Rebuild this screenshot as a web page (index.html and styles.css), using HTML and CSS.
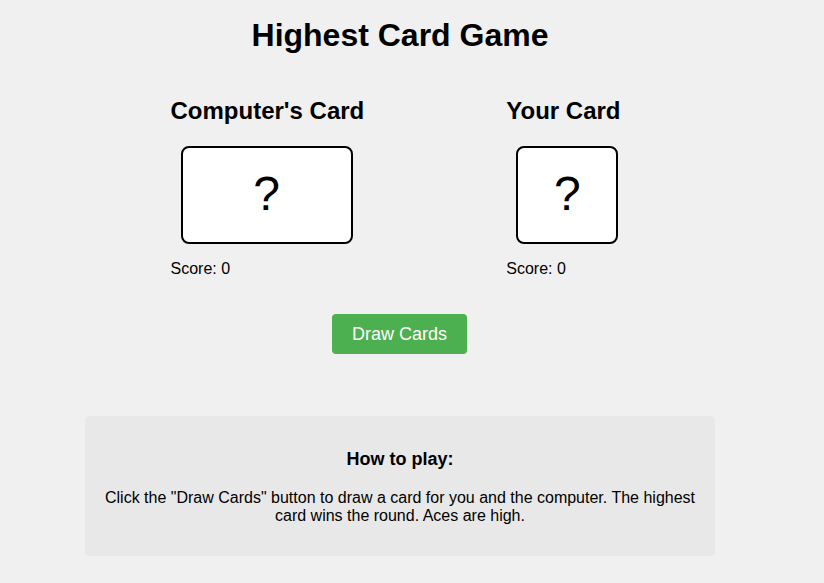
FILE: index.html
```html
<!DOCTYPE html>
<html>
<head>
<meta charset="utf-8">
<link rel="stylesheet" href="styles.css">
</head>
<body>
<div class="page">
  <h1 class="title">Highest Card Game</h1>
  <div class="players">
    <div class="player player-computer">
      <h2 class="player-title">Computer's Card</h2>
      <div class="card card-wide">?</div>
      <div class="score">Score: 0</div>
    </div>
    <div class="player player-you">
      <h2 class="player-title">Your Card</h2>
      <div class="card card-narrow">?</div>
      <div class="score">Score: 0</div>
    </div>
  </div>
  <div class="actions">
    <button class="draw-btn">Draw Cards</button>
  </div>
  <div class="instructions">
    <h3 class="instructions-title">How to play:</h3>
    <p class="instructions-text">Click the "Draw Cards" button to draw a card for you and the computer. The highest card wins the round. Aces are high.</p>
  </div>
</div>
</body>
</html>
```

FILE: styles.css
```css
html, body {
  margin: 0;
  padding: 0;
  background: #f0f0f0;
  font-family: "Liberation Sans", Arial, sans-serif;
  color: #000;
}
.page {
  width: 800px;
  display: flex;
  flex-direction: column;
  align-items: center;
}
.title {
  font-size: 32px;
  font-weight: bold;
  margin: 17px 0 0;
  line-height: 37px;
}
.players {
  display: flex;
  margin-top: 43px;
  margin-left: -9px;
  gap: 142px;
}
.player {
  display: flex;
  flex-direction: column;
  align-items: flex-start;
}
.player-title {
  font-size: 24px;
  font-weight: bold;
  margin: 0;
  line-height: 28px;
}
.card {
  box-sizing: border-box;
  height: 98px;
  margin: 21px 0 0 10px;
  border: 2px solid #000;
  border-radius: 8px;
  background: #fff;
  display: flex;
  align-items: center;
  justify-content: center;
  font-size: 48px;
  padding-bottom: 3px;
}
.card-wide { width: 172px; }
.card-narrow { width: 102px; }
.score {
  font-size: 16px;
  line-height: 18px;
  margin-top: 16px;
}
.actions {
  margin-top: 36px;
}
.draw-btn {
  background: #4caf50;
  color: #fff;
  border: none;
  border-radius: 4px;
  font-family: "Liberation Sans", Arial, sans-serif;
  font-size: 18px;
  width: 135px;
  height: 40px;
  padding: 0;
  margin-left: -1px;
}
.instructions {
  box-sizing: border-box;
  width: 630px;
  margin-top: 62px;
  padding: 33px 14px 31px;
  background: #e8e8e8;
  border-radius: 5px;
  text-align: center;
}
.instructions-title {
  font-size: 18px;
  font-weight: bold;
  margin: 0 0 19px;
  line-height: 21px;
}
.instructions-text {
  font-size: 16px;
  margin: 0;
  line-height: 18px;
}
```
